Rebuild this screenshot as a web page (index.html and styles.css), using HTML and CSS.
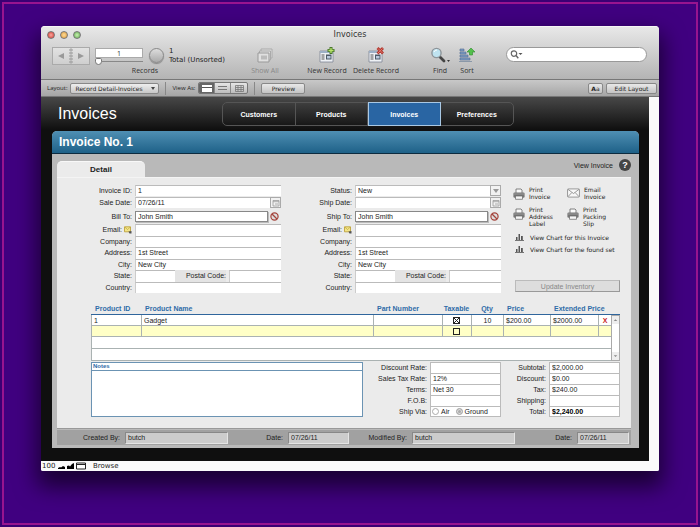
FILE: index.html
```html
<!DOCTYPE html>
<html lang="en">
<head>
  <meta charset="UTF-8">
  <title>Invoices</title>
  <meta name="viewport" content="width=device-width, initial-scale=1.0"/>
  <link rel="stylesheet" href="styles.css">
</head>
<body>
  <svg class="defs" width="0" height="0">
    <symbol id="i-none" viewBox="0 0 8 8"><circle cx="4" cy="4" r="3.2" fill="#ddd" stroke="#a5453c" stroke-width="1.1"/><path d="M1.8 1.8l4.4 4.4" stroke="#a5453c" stroke-width="1.1"/></symbol>
    <symbol id="i-note" viewBox="0 0 8 8"><path d="M.5.8h6v5h-6z" fill="#f3e58a" stroke="#b79a2c" stroke-width=".8"/><path d="M1 1.2l2.6 2.4L6 1.2" fill="none" stroke="#b79a2c" stroke-width=".6"/><path d="M4.500 5.500L5.500 7.500h2V5z" fill="#555"/></symbol>
    <symbol id="i-cal" viewBox="0 0 8 8"><path d="M1 1.5h6v5.500H1z" fill="#f2f2f2" stroke="#999" stroke-width=".8"/><path d="M1 2.700h6M3 5h3" stroke="#999" stroke-width=".8"/></symbol>
    <symbol id="i-print" viewBox="0 0 12 12"><path d="M3 5V1h5l1 1v3" fill="#fafafa" stroke="#666" stroke-width=".8"/><rect x=".4" y="4.500" width="11.200" height="5.200" rx="1.300" fill="#777"/><path d="M1 6h10" stroke="#aaa" stroke-width=".7"/><path d="M2.500 8h7v3.300h-7z" fill="#f6f6f6" stroke="#666" stroke-width=".7"/></symbol>
    <symbol id="i-mail" viewBox="0 0 14 10"><rect x=".6" y=".6" width="12.800" height="8.800" rx="1" fill="#f7f7f7" stroke="#888" stroke-width=".9"/><path d="M1 1l6 4.600L13 1M1 9l4.200-4.500M13 9L8.800 4.500" fill="none" stroke="#888" stroke-width=".9"/></symbol>
    <symbol id="i-chart" viewBox="0 0 9 8"><path d="M1 7V4h1.500v3zM3.500 7V1H5v6zM6 7V3h1.800v4z" fill="#555"/><path d="M0 7.500h9" stroke="#555" stroke-width=".8"/></symbol>
    <symbol id="i-record" viewBox="0 0 16 16"><path d="M1 4h13v11H1z" fill="#eef1f5" stroke="#7d8794" stroke-width=".8"/><path d="M1 4h13v2H1z" fill="#9db0c6"/><path d="M2.500 8h3M2.500 10h3M2.500 12h3" stroke="#555" stroke-width="1"/><path d="M7 7.500h5.500v5H7z" fill="#4d5a68"/><path d="M8 9h3.500v2.500H8z" fill="#b9c9dc"/></symbol>
  </svg>

  <div class="desktop">
    <div class="window">
      <header class="chrome">
        <div class="titlebar">
          <span class="lights"><i class="red"></i><i class="amber"></i><i class="green"></i></span>
          <h1>Invoices</h1>
        </div>
        <div class="toolbar">
          <div class="records">
            <div class="records-row">
              <div class="book">
                <button type="button" aria-label="Previous record"><svg width="8" height="8" viewBox="0 0 8 8"><path d="M7 1v6L1 4z" fill="#999"/></svg></button>
                <svg width="4" height="16" viewBox="0 0 4 16"><path d="M2 0v16" stroke="#aaa"/><path d="M0 2h4M0 5h4M0 8h4M0 11h4M0 14h4" stroke="#999"/></svg>
                <button type="button" aria-label="Next record"><svg width="8" height="8" viewBox="0 0 8 8"><path d="M1 1v6l6-3z" fill="#999"/></svg></button>
              </div>
              <div class="position">
                <input type="text" value="1" aria-label="Current record">
                <input type="range" min="1" max="10" value="1" aria-label="Record slider">
              </div>
              <span class="pie"></span>
              <p>1<br>Total (Unsorted)</p>
            </div>
            <span>Records</span>
          </div>
          <button type="button" class="tool show-all" disabled>
            <svg width="16" height="16" viewBox="0 0 16 16"><path d="M4 5V2h11v9h-2" fill="#ddd" stroke="#aaa"/><path d="M2.500 6.500V4h11v9h-2" fill="#ddd" stroke="#aaa"/><path d="M1 6h11v9H1z" fill="#e0e0e0" stroke="#999"/><path d="M4 8.500h6v4H4z" fill="#bbb"/></svg>
            Show All
          </button>
          <button type="button" class="tool new">
            <svg width="16" height="16" viewBox="0 0 16 16"><use href="#i-record"/><path d="M12 0v7M8.500 3.500h7" stroke="#47752a" stroke-width="3"/><path d="M12 1v5M9.500 3.500h5" stroke="#b9e66a" stroke-width="1.300"/></svg>
            New Record
          </button>
          <button type="button" class="tool delete">
            <svg width="16" height="16" viewBox="0 0 16 16"><use href="#i-record"/><path d="M9.500 1l5.500 5.500M15 1L9.500 6.500" stroke="#b3392f" stroke-width="2.800"/><path d="M10 1.500l4.500 4.500M14.500 1.500L10 6" stroke="#e2786e" stroke-width="1"/></svg>
            Delete Record
          </button>
          <button type="button" class="tool find">
            <svg width="20" height="16" viewBox="0 0 20 16"><path d="M9 9l5 5" stroke="#444" stroke-width="2.800" stroke-linecap="round"/><circle cx="6.500" cy="6" r="4.600" fill="#bfe3f0" stroke="#8d9499" stroke-width="1.400"/><path d="M4 5a3 3 0 0 1 3-2" fill="none" stroke="#fff"/><path d="M17 13h3l-1.500 2z" fill="#333"/></svg>
            Find
          </button>
          <button type="button" class="tool sort">
            <svg width="16" height="16" viewBox="0 0 16 16"><path d="M1 2h4v2H1zM1 5h6v2H1zM1 8h8v2H1zM1 11h10v2H1z" fill="#7f9dc4" stroke="#4e6a91" stroke-width=".6"/><path d="M0 14.500h13" stroke="#8a98a8"/><path d="M12 1l4 4h-2.500v3h-3V5H8z" fill="#53c04c" stroke="#2f8a2d" stroke-width=".6"/></svg>
            Sort
          </button>
          <div class="search">
            <svg width="13" height="9" viewBox="0 0 13 9"><circle cx="4" cy="3.600" r="2.700" fill="none" stroke="#666" stroke-width="1.200"/><path d="M6 5.500L8.300 8.300" stroke="#666" stroke-width="1.400"/><path d="M8.500 3h4l-2 2z" fill="#555"/></svg>
            <input type="search" aria-label="Search">
          </div>
        </div>
      </header>

      <div class="layoutbar">
        <label for="layout">Layout:</label>
        <span class="drop"><select id="layout"><option>Record Detail-Invoices</option></select></span>
        <i class="divider"></i>
        <span>View As:</span>
        <div class="views">
          <button type="button" class="on" aria-label="Form"><svg width="10" height="7" viewBox="0 0 10 7"><path d="M0 0h10v7H0z" fill="#fff"/><path d="M0 2.500h10" stroke="#555"/></svg></button>
          <button type="button" aria-label="List"><svg width="9" height="6" viewBox="0 0 9 6"><path d="M0 1.500h9M0 4.500h9" stroke="#777"/></svg></button>
          <button type="button" aria-label="Table"><svg width="9" height="7" viewBox="0 0 9 7"><path d="M.5.5h8v6h-8zM.5 2.500h8M.5 4.500h8M3 .5v6M6 .5v6" fill="none" stroke="#777" stroke-width=".8"/></svg></button>
        </div>
        <i class="divider"></i>
        <button type="button" class="push preview">Preview</button>
        <button type="button" class="push font" aria-label="Text formatting"><b>A</b>a</button>
        <button type="button" class="push edit">Edit Layout</button>
      </div>

      <div class="view">
        <main class="content">
          <div class="masthead">
            <h2>Invoices</h2>
            <nav>
              <a href="#">Customers</a>
              <a href="#">Products</a>
              <a href="#" class="current">Invoices</a>
              <a href="#">Preferences</a>
            </nav>
          </div>

          <section class="record">
            <h3>Invoice No. 1</h3>
            <div class="tabs">
              <span class="tab">Detail</span>
              <a href="#">View Invoice <b>?</b></a>
            </div>

            <div class="panel">
              <div class="top">
                <form class="party">
                  <div class="row"><label for="invId">Invoice ID:</label><input id="invId" value="1"></div>
                  <div class="row"><label for="saleDate">Sale Date:</label><input id="saleDate" value="07/26/11"><button type="button" class="pick" aria-label="Calendar"><svg width="8" height="8"><use href="#i-cal"/></svg></button></div>
                  <div class="row who"><label for="billTo">Bill To:</label><input id="billTo" value="John Smith"><button type="button" class="clear" aria-label="Clear"><svg width="9" height="9"><use href="#i-none"/></svg></button></div>
                  <div class="address">
                    <div class="row"><label for="bEmail">Email: <svg width="8" height="8"><use href="#i-note"/></svg></label><input id="bEmail"></div>
                    <div class="row"><label for="bCompany">Company:</label><input id="bCompany"></div>
                    <div class="row"><label for="bAddress">Address:</label><input id="bAddress" value="1st Street"></div>
                    <div class="row"><label for="bCity">City:</label><input id="bCity" value="New City"></div>
                    <div class="row"><label for="bState">State:</label><input id="bState"><label for="bZip" class="zip">Postal Code:</label><input id="bZip"></div>
                    <div class="row"><label for="bCountry">Country:</label><input id="bCountry"></div>
                  </div>
                </form>

                <form class="party">
                  <div class="row"><label for="status">Status:</label><select id="status"><option>New</option></select><span class="pick"><svg width="6" height="4" viewBox="0 0 6 4"><path d="M0 0h6L3 4z" fill="#999"/></svg></span></div>
                  <div class="row"><label for="shipDate">Ship Date:</label><input id="shipDate"><button type="button" class="pick" aria-label="Calendar"><svg width="8" height="8"><use href="#i-cal"/></svg></button></div>
                  <div class="row who"><label for="shipTo">Ship To:</label><input id="shipTo" value="John Smith"><button type="button" class="clear" aria-label="Clear"><svg width="9" height="9"><use href="#i-none"/></svg></button></div>
                  <div class="address">
                    <div class="row"><label for="sEmail">Email: <svg width="8" height="8"><use href="#i-note"/></svg></label><input id="sEmail"></div>
                    <div class="row"><label for="sCompany">Company:</label><input id="sCompany"></div>
                    <div class="row"><label for="sAddress">Address:</label><input id="sAddress" value="1st Street"></div>
                    <div class="row"><label for="sCity">City:</label><input id="sCity" value="New City"></div>
                    <div class="row"><label for="sState">State:</label><input id="sState"><label for="sZip" class="zip">Postal Code:</label><input id="sZip"></div>
                    <div class="row"><label for="sCountry">Country:</label><input id="sCountry"></div>
                  </div>
                </form>

                <div class="actions">
                  <div class="prints">
                    <a href="#"><svg width="12" height="12"><use href="#i-print"/></svg><span>Print<br>Invoice</span></a>
                    <a href="#"><svg width="13" height="10"><use href="#i-mail"/></svg><span>Email<br>Invoice</span></a>
                    <a href="#"><svg width="12" height="12"><use href="#i-print"/></svg><span>Print<br>Address<br>Label</span></a>
                    <a href="#"><svg width="12" height="12"><use href="#i-print"/></svg><span>Print<br>Packing<br>Slip</span></a>
                  </div>
                  <a href="#" class="chart"><svg width="9" height="8"><use href="#i-chart"/></svg>View Chart for this Invoice</a>
                  <a href="#" class="chart"><svg width="9" height="8"><use href="#i-chart"/></svg>View Chart for the found set</a>
                  <button type="button" class="update">Update Inventory</button>
                </div>
              </div>

              <div class="lines">
                <table>
                  <colgroup><col class="c-id"><col><col class="c-part"><col class="c-tax"><col class="c-qty"><col class="c-price"><col class="c-ext"><col class="c-del"></colgroup>
                  <thead>
                    <tr><th>Product ID</th><th>Product Name</th><th>Part Number</th><th class="mid">Taxable</th><th class="mid">Qty</th><th>Price</th><th colspan="2">Extended Price</th></tr>
                  </thead>
                  <tbody>
                    <tr><td>1</td><td>Gadget</td><td></td><td class="mid"><input type="checkbox" checked aria-label="Taxable"></td><td class="mid">10</td><td>$200.00</td><td>$2000.00</td><td class="mid"><button type="button" class="del">X</button></td></tr>
                    <tr class="new-line"><td></td><td></td><td></td><td class="mid"><input type="checkbox" aria-label="Taxable"></td><td></td><td></td><td></td><td></td></tr>
                    <tr class="blank"><td colspan="8"></td></tr>
                    <tr class="blank"><td colspan="8"></td></tr>
                  </tbody>
                </table>
                <div class="scroll">
                  <svg width="8" height="8" viewBox="0 0 8 8"><path d="M2 5h4L4 3z" fill="#888"/></svg>
                  <svg width="8" height="8" viewBox="0 0 8 8"><path d="M2 3h4L4 5z" fill="#888"/></svg>
                </div>
              </div>

              <div class="bottom">
                <div class="notes">
                  <label for="notes">Notes</label>
                  <textarea id="notes"></textarea>
                </div>
                <div class="sums terms">
                  <label for="discRate">Discount Rate:</label><input id="discRate">
                  <label for="taxRate">Sales Tax Rate:</label><input id="taxRate" value="12%">
                  <label for="terms">Terms:</label><input id="terms" value="Net 30">
                  <label for="fob">F.O.B:</label><input id="fob">
                  <span class="cap">Ship Via:</span>
                  <div class="via">
                    <label><input type="radio" name="via">Air</label>
                    <label><input type="radio" name="via" checked>Ground</label>
                  </div>
                </div>
                <div class="sums totals">
                  <label for="subtotal">Subtotal:</label><input id="subtotal" value="$2,000.00">
                  <label for="discount">Discount:</label><input id="discount" value="$0.00">
                  <label for="tax">Tax:</label><input id="tax" value="$240.00">
                  <label for="shipping">Shipping:</label><input id="shipping">
                  <label for="total">Total:</label><input id="total" class="total" value="$2,240.00">
                </div>
              </div>
            </div>

            <div class="audit">
              <label for="createdBy">Created By:</label><input id="createdBy" value="butch">
              <label for="createdOn">Date:</label><input id="createdOn" value="07/26/11">
              <label for="modifiedBy">Modified By:</label><input id="modifiedBy" value="butch">
              <label for="modifiedOn">Date:</label><input id="modifiedOn" value="07/26/11">
            </div>
          </section>
        </main>
      </div>

      <footer class="status">
        <span class="zoom">100</span>
        <button type="button" aria-label="Zoom out"><svg width="8" height="8" viewBox="0 0 8 8"><path d="M0 7V6l2-1 1 .5L5 4l2 1v2z" fill="#000"/></svg></button>
        <button type="button" aria-label="Zoom in"><svg width="8" height="8" viewBox="0 0 8 8"><path d="M0 7V4l2-.5 1 1L5 2l2-1v6z" fill="#000"/></svg></button>
        <button type="button" aria-label="Toolbar"><svg width="10" height="8" viewBox="0 0 10 8"><path d="M.5 1h9v6h-9z" fill="#fff" stroke="#222"/><path d="M0 2.500h10" stroke="#222"/></svg></button>
        <span class="mode">Browse</span>
      </footer>
    </div>
  </div>
</body>
</html>
```
FILE: styles.css
```css
* { box-sizing: border-box; }
body { margin: 0; background: #400080; font: 7px/9px "Liberation Sans", Arial, sans-serif; color: #222; }
h1, h2, h3, p { margin: 0; font-weight: normal; }
a { color: inherit; text-decoration: none; }
button, input, select, textarea { margin: 0; padding: 0; border: 0; border-radius: 0; background: none; font: inherit; color: inherit; min-width: 0; outline: none; appearance: none; }
svg { display: block; flex: none; }
.defs { position: absolute; }

.desktop { min-height: 100vh; padding: 24px 39px 54px; border: 2px solid #3a0074; outline: 2px solid #98148f; outline-offset: -4px; }
.window { border-radius: 4px 4px 2px 2px; overflow: hidden; background: #fafafa; box-shadow: 0 12px 22px 4px rgba(0, 0, 0, .6); }

/* title and toolbar */
.chrome { height: 54px; background: linear-gradient(#e8e8e8, #b4b4b4); border-top: 1px solid #f6f6f6; border-bottom: 1px solid #777; font-family: "Open Sans", sans-serif; }
.titlebar { display: flex; align-items: center; height: 15px; padding: 0 6px; }
.titlebar h1 { flex: 1; text-align: center; font: 8px/14px "DejaVu Sans", sans-serif; color: #333; padding-right: 34px; }
.lights { display: flex; gap: 5px; width: 34px; }
.lights i { width: 8px; height: 8px; border-radius: 50%; border: 1px solid #777; }
.red { background: radial-gradient(#f7a8a0, #d8332b); }
.amber { background: radial-gradient(#fbdc9c, #e39a30); }
.green { background: radial-gradient(#c9efb4, #5fae4b); }
.toolbar { display: flex; align-items: flex-start; padding: 5px 12px 0 11px; color: #333; }
.records { width: 186px; text-align: center; }
.records-row { display: flex; height: 19px; text-align: left; }
.book { display: flex; align-items: center; width: 38px; height: 18px; border: 1px solid #aaa; background: linear-gradient(#e2e2e2, #cfcfcf); }
.book button { flex: 1; display: flex; justify-content: center; }
.position { display: flex; flex-direction: column; width: 48px; margin: 1px 6px 0 5px; }
.position input[type=text] { height: 10px; background: #fff; border: 1px solid #aaa; text-align: center; width: 100%; }
.position input[type=range] { width: 100%; height: 7px; background: linear-gradient(#888, #888) 0 3px / 100% 1px no-repeat; }
.position input[type=range]::-webkit-slider-thumb { appearance: none; width: 7px; height: 7px; border: 1px solid #777; border-radius: 2px 2px 4px 4px; background: #fff; }
.pie { width: 15px; height: 15px; margin-top: 1px; border: 1px solid #888; border-radius: 50%; background: linear-gradient(#ddd, #aaa); box-shadow: 0 1px 1px #888; }
.records p { margin-left: 5px; font-family: "DejaVu Sans", sans-serif; color: #222; }
.tool { display: flex; flex-direction: column; align-items: center; gap: 3px; white-space: nowrap; }
.show-all { width: 36px; margin-left: 9px; color: #888; }
.new { width: 46px; margin-left: 21px; }
.delete { width: 48px; margin-left: 2px; }
.find { width: 26px; margin-left: 27px; }
.sort { width: 26px; margin-left: 1px; }
.search { display: flex; align-items: center; flex: 0 1 141px; height: 15px; margin-left: auto; padding: 0 4px 0 3px; background: #fff; border: 1px solid #999; border-radius: 8px; }
.search input { flex: 1; }

.layoutbar { display: flex; align-items: center; height: 17px; padding: 0 2px 0 6px; background: linear-gradient(#c8c8c8, #a6a6a6); border-bottom: 1px solid #777; font: 6px/9px "Open Sans", sans-serif; white-space: nowrap; }
.drop { position: relative; width: 89px; margin-left: 3px; }
.drop select { width: 100%; height: 11px; display: block; padding: 0 4px; border: 1px solid #888; border-radius: 2px; background: linear-gradient(#eee, #c8c8c8); font: 6px/9px "DejaVu Sans", sans-serif; }
.drop::after { content: ""; position: absolute; right: 4px; top: 4px; border: 2px solid transparent; border-top: 3px solid #444; pointer-events: none; }
.divider { width: 1px; height: 13px; margin: 0 6px; background: #888; }
.views { display: flex; margin-left: 3px; height: 12px; border: 1px solid #777; border-radius: 2px; overflow: hidden; background: linear-gradient(#e6e6e6, #bdbdbd); }
.views button { display: flex; align-items: center; justify-content: center; width: 16px; border-right: 1px solid #888; }
.views button:last-child { border-right: 0; }
.views .on { background: #666; }
.push { height: 11px; border: 1px solid #888; border-radius: 2px; background: linear-gradient(#e8e8e8, #c4c4c4); font: 6px/9px "DejaVu Sans", sans-serif; }
.preview { width: 44px; }
.font { width: 15px; margin-left: auto; }
.edit { width: 51px; margin-left: 3px; }

/* layout body */
.view { padding-right: 10px; background: #fafafa; }
.content { padding: 0 10px 13px 11px; background: #0f0f0f linear-gradient(#484848, #0f0f0f) 0 0 / 100% 33px no-repeat; }
.masthead { display: flex; align-items: center; height: 34px; padding-left: 6px; }
.masthead h2 { flex: 0 0 164px; font-size: 16px; line-height: 20px; color: #fff; }
.masthead nav { display: grid; grid-template-columns: repeat(4, 1fr); flex: 0 1 292px; height: 24px; border: 1px solid #555; border-radius: 5px; }
.masthead a { display: flex; align-items: center; justify-content: center; font-weight: bold; color: #fff; border-right: 1px solid #555; }
.masthead a:last-child { border-right: 0; }
.masthead .current { margin: -1px 0; background: #2965a3; border: 1px solid #a9c8e4; }
.masthead .current:hover { background: #3574b4; }

.record { padding-bottom: 3px; background: #b9b9b9; border-radius: 5px 5px 0 0; }
.record h3 { height: 23px; padding-left: 7px; border-bottom: 1px solid #0c2b3f; border-radius: 5px 5px 0 0; background: linear-gradient(#4f8fb3, #1e6188); font-size: 12px; line-height: 22px; font-weight: bold; color: #fff; }
.tabs { display: flex; justify-content: space-between; align-items: flex-end; height: 23px; padding: 0 8px 0 5px; }
.tab { width: 88px; height: 16px; border-radius: 5px 5px 0 0; background: #ebebeb; border-top: 1px solid #f8f8f8; text-align: center; font-size: 8px; line-height: 15px; font-weight: bold; }
.tabs a { display: flex; align-items: center; gap: 6px; height: 12px; margin-bottom: 6px; }
.tabs b { width: 12px; height: 12px; border-radius: 50%; background: #444; color: #fff; text-align: center; font-size: 9px; line-height: 12px; }
.panel { margin: 0 8px 0 5px; padding: 7px 11px 11px 34px; background: #ebebeb; border-top: 1px solid #f4f4f4; border-bottom: 1px solid #999; }

.top { display: flex; }
.party { width: 190px; }
.party + .party { width: 220px; }
.row { display: flex; height: 11px; margin-bottom: 1px; }
.row label { display: flex; justify-content: flex-end; align-items: center; gap: 2px; flex: 1; margin-right: 3px; white-space: nowrap; }
.row input, .row select { width: 146px; padding: 0 2px 1px; background: #fff; border-top: 1px solid #bbb; border-left: 1px solid #ccc; }
.row .pick { display: flex; align-items: center; justify-content: center; width: 11px; background: #f2f2f2; border: 1px solid #aaa; }
.row input:has(+ .pick), .row select { width: 135px; }
.who { margin: 3px 0 2px; }
.who input { width: 133px; padding: 0 2px; border: 1px solid #888; box-shadow: 1px 1px 0 #bbb; }
.clear { width: 13px; display: flex; align-items: center; justify-content: flex-end; padding-right: 2px; }
.address { display: grid; grid-template-rows: repeat(6, 1fr); height: 69px; }
.address .row { height: auto; margin: 0; }
.address .row:has(.zip) input { width: 40px; }
.address .row .zip + input { width: 52px; }
.address .zip { flex: 0 0 51px; margin: 0 3px 0 0; background: #e4e4e4; }

.actions { display: flex; flex-direction: column; flex: 0 0 107px; margin-left: auto; font: 6px/7px "DejaVu Sans", sans-serif; white-space: nowrap; }
.prints { display: grid; grid-template-columns: 54px 1fr; row-gap: 6px; padding-top: 1px; }
.prints a { display: flex; gap: 4px; }
.prints svg { margin-top: 2px; }
.chart { display: flex; align-items: center; gap: 6px; height: 8px; margin: 4px 0 0 2px; }
.prints + .chart { margin-top: 6px; }
.update { height: 12px; margin: auto 0 1px 2px; background: #ddd; border: 1px solid #bbb; border-right-color: #999; border-bottom-color: #999; font: 7px/9px "Liberation Sans", Arial, sans-serif; color: #888; }

.lines { display: flex; margin-top: 8px; background: linear-gradient(#2f659c, #2f659c) 0 13px / 100% 1px no-repeat; }
.lines table { flex: 1; table-layout: fixed; border-collapse: separate; border-spacing: 0; width: 0; }
.c-id { width: 50px; }
.c-part { width: 69px; }
.c-tax { width: 29px; }
.c-qty { width: 32px; }
.c-price { width: 47px; }
.c-ext { width: 48px; }
.c-del { width: 13px; }
.lines th { height: 14px; padding: 0 0 0 4px; text-align: left; color: #2f6ca8; white-space: nowrap; }
.lines td { height: 11px; padding: 0 0 0 2px; line-height: 9px; background: #fff; border-left: 1px solid #aab2b2; border-bottom: 1px solid #aab2b2; }
.lines .mid { padding: 0; text-align: center; }
.lines .new-line td { background: #ffffc6; }
.lines .blank td { height: 12px; }
.lines input { display: block; width: 7px; height: 7px; margin: 0 auto; border: 1px solid #222; }
.lines input:checked { background: linear-gradient(45deg, transparent 43%, #222 43%, #222 57%, transparent 57%), linear-gradient(-45deg, transparent 43%, #222 43%, #222 57%, transparent 57%); }
.del { display: block; margin: 0 auto; font-weight: bold; color: #c81e1e; }
.scroll { display: flex; flex-direction: column; justify-content: space-between; width: 9px; margin-top: 14px; background: #fff; border: 1px solid #aaa; }
.scroll svg { width: 7px; background: #eee; }

.bottom { display: grid; grid-template-columns: 272px 138px 1fr; height: 55px; margin-top: 1px; }
.notes { display: flex; flex-direction: column; background: #fff; border: 1px solid #6b93b3; }
.notes label { height: 8px; padding-left: 1px; border-bottom: 1px solid #6b93b3; font: bold 6px/7px "Liberation Sans", Arial, sans-serif; color: #2f6ca8; }
.notes textarea { flex: 1; resize: none; padding: 2px; }
.sums { display: grid; grid-template-columns: 1fr 71px; grid-template-rows: repeat(5, 1fr); column-gap: 3px; }
.sums > label, .cap { text-align: right; line-height: 11px; }
.sums > input, .via { width: 100%; padding: 0 2px 1px; background: #fff; border: 1px solid #bbb; border-bottom: 0; }
.sums > :last-child { border-bottom: 1px solid #bbb; padding-bottom: 0; }
.via { display: flex; gap: 6px; padding: 0 1px; }
.via label { display: flex; align-items: center; gap: 2px; }
.via input { width: 7px; height: 7px; border: 1px solid #aaa; border-radius: 50%; background: #fff; }
.via input:checked { background: #aaa; box-shadow: inset 0 0 0 1px #ddd; }
.total { font-weight: bold; color: #000; }

.audit { display: grid; grid-template-columns: 68px 103px 60px 61px 63px 103px 62px 1fr; align-items: center; height: 15px; margin: 1px 8px 0 5px; padding-right: 2px; background: #a1a1a1; }
.audit label { text-align: right; padding-right: 5px; }
.audit input { width: 100%; height: 12px; padding: 0 2px; background: #ccc; border: 1px solid #888; border-right-color: #e4e4e4; border-bottom-color: #e4e4e4; }

.status { display: flex; align-items: center; height: 10px; background: #fafafa; font: 7px/10px "DejaVu Sans", sans-serif; }
.zoom { width: 16px; padding-left: 1px; }
.status button { margin-left: 1px; }
.mode { margin-left: 7px; }
```
